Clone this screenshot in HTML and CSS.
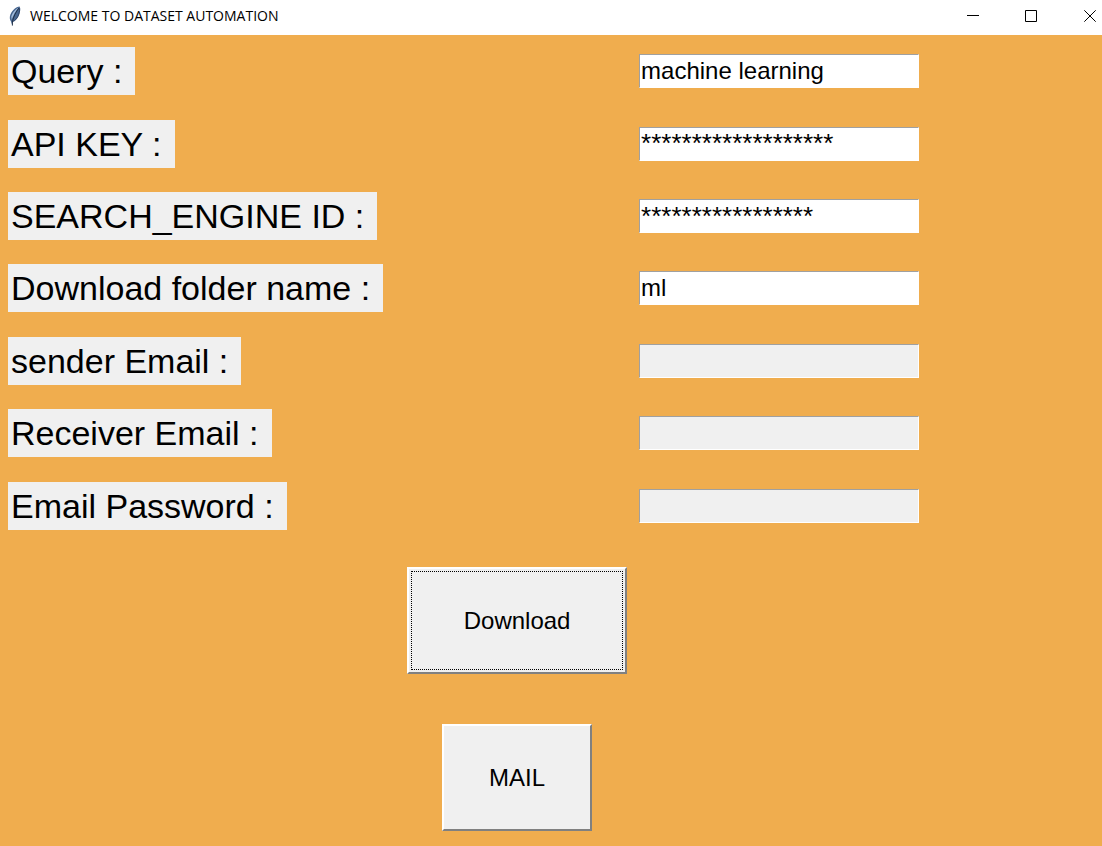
FILE: index.html
```html
<!DOCTYPE html>
<html lang="en">
<head>
<meta charset="utf-8">
<meta name="viewport" content="width=device-width, initial-scale=1">
<title>WELCOME TO DATASET AUTOMATION</title>
<link rel="stylesheet" href="styles.css">
</head>
<body>
<header class="titlebar">
  <svg class="titlebar-icon" viewBox="0 0 14 20" aria-hidden="true">
    <path d="M11.6.4C8 .8 4.200 4 2.400 8.600c-1 2.700-.8 5.200.6 7L4.300 19.600l.7-3.800c2.600-.9 4.700-3.400 6-6.800C12.200 5.600 12.800 2.300 11.600.4z" fill="#46658f"/>
    <path d="M10.600 1.400C7 3.400 4.200 6.800 3.300 10.600l.3 3.400C5 9.400 7.600 4.800 10.600 1.400z" fill="#a3bddd"/>
    <path d="M11 2C8 5.800 5.400 10.500 4.400 16v3.600" fill="none" stroke="#1c2a40" stroke-width=".9"/>
    <path d="M11.600 2.500C11.800 8 9 13.800 5.200 15.400" fill="none" stroke="#26395a" stroke-width=".8"/>
  </svg>
  <h1 class="titlebar-text">WELCOME TO DATASET AUTOMATION</h1>
  <div class="window-controls">
    <button class="window-button" type="button" aria-label="Minimize">
      <svg viewBox="0 0 12 12" aria-hidden="true"><path d="M0 5.500h12"/></svg>
    </button>
    <button class="window-button" type="button" aria-label="Maximize">
      <svg viewBox="0 0 12 12" aria-hidden="true"><path d="M.5.5h11v11H.5z"/></svg>
    </button>
    <button class="window-button window-close" type="button" aria-label="Close">
      <svg viewBox="0 0 12 12" aria-hidden="true"><path d="M.3.300l11.400 11.400M11.700.3L.3 11.700"/></svg>
    </button>
  </div>
</header>
<form class="form">
  <label class="label" for="query">Query :</label>
  <input class="entry" id="query" type="text" value="machine learning">
  <label class="label" for="api-key">API KEY :</label>
  <input class="entry masked" id="api-key" type="text" value="*******************">
  <label class="label" for="engine-id">SEARCH_ENGINE ID :</label>
  <input class="entry masked" id="engine-id" type="text" value="*****************">
  <label class="label" for="folder">Download folder name :</label>
  <input class="entry" id="folder" type="text" value="ml">
  <label class="label" for="sender">sender Email :</label>
  <input class="entry" id="sender" type="text" disabled>
  <label class="label" for="receiver">Receiver Email :</label>
  <input class="entry" id="receiver" type="text" disabled>
  <label class="label" for="password">Email Password :</label>
  <input class="entry" id="password" type="text" disabled>
  <button class="action download" type="button"><span class="focus-ring">Download</span></button>
  <button class="action mail" type="button">MAIL</button>
</form>
</body>
</html>
```
FILE: styles.css
```css
* {
  box-sizing: border-box;
}

body {
  margin: 0;
  min-height: 100vh;
  display: flex;
  flex-direction: column;
  background: #f0ad4e;
  color: #000;
  font-family: "Liberation Sans", Arial, sans-serif;
}

.titlebar {
  display: flex;
  align-items: center;
  height: 35px;
  padding-bottom: 4px;
  padding-left: 8px;
  background: #fff;
}

.titlebar-icon {
  width: 14px;
  height: 20px;
  margin-right: 8px;
}

.titlebar-text {
  margin: 0;
  font: 400 14px/20px "Open Sans", "Noto Sans", sans-serif;
  white-space: nowrap;
}

.window-controls {
  display: flex;
  margin-left: auto;
}

.window-button {
  display: flex;
  align-items: center;
  justify-content: center;
  width: 58px;
  height: 31px;
  padding: 0;
  border: 0;
  background: none;
}

.window-close {
  width: 42px;
  padding-left: 18px;
}

.window-button svg {
  width: 12px;
  height: 12px;
  fill: none;
  stroke: #000;
  stroke-width: 1;
}

.form {
  flex: 1;
  display: grid;
  grid-template-columns: max-content max-content 1fr;
  grid-template-rows: repeat(7, minmax(72px, 1fr)) auto auto;
  align-items: center;
  justify-items: start;
  padding-left: 8px;
}

.label {
  grid-column: 1;
  margin-right: 12px;
  padding: 0 13px 0 3px;
  background: #f0f0f0;
  font-size: 34px;
  line-height: 48px;
  white-space: nowrap;
}

.entry {
  grid-column: 3;
  width: 280px;
  height: 34px;
  padding: 0 1px;
  border: 1px solid;
  border-color: #a0a0a0 #fff #fff #a0a0a0;
  border-radius: 0;
  background: #fff;
  color: #000;
  font-family: inherit;
  font-size: 24px;
}

.masked {
  font-size: 26px;
}

.entry:disabled {
  background: #f0f0f0;
}

.action {
  grid-column: 2;
  justify-self: center;
  height: 107px;
  margin: 25px 12px;
  padding: 0;
  border: 2px solid;
  border-color: #fff #808080 #808080 #fff;
  border-radius: 0;
  background: #f0f0f0;
  color: #000;
  font-family: inherit;
  font-size: 24px;
}

.download {
  width: 220px;
  padding: 2px;
}

.focus-ring {
  display: flex;
  align-items: center;
  justify-content: center;
  height: 100%;
  border: 1px dotted #000;
}

.mail {
  width: 150px;
  margin-bottom: 15px;
}
```
